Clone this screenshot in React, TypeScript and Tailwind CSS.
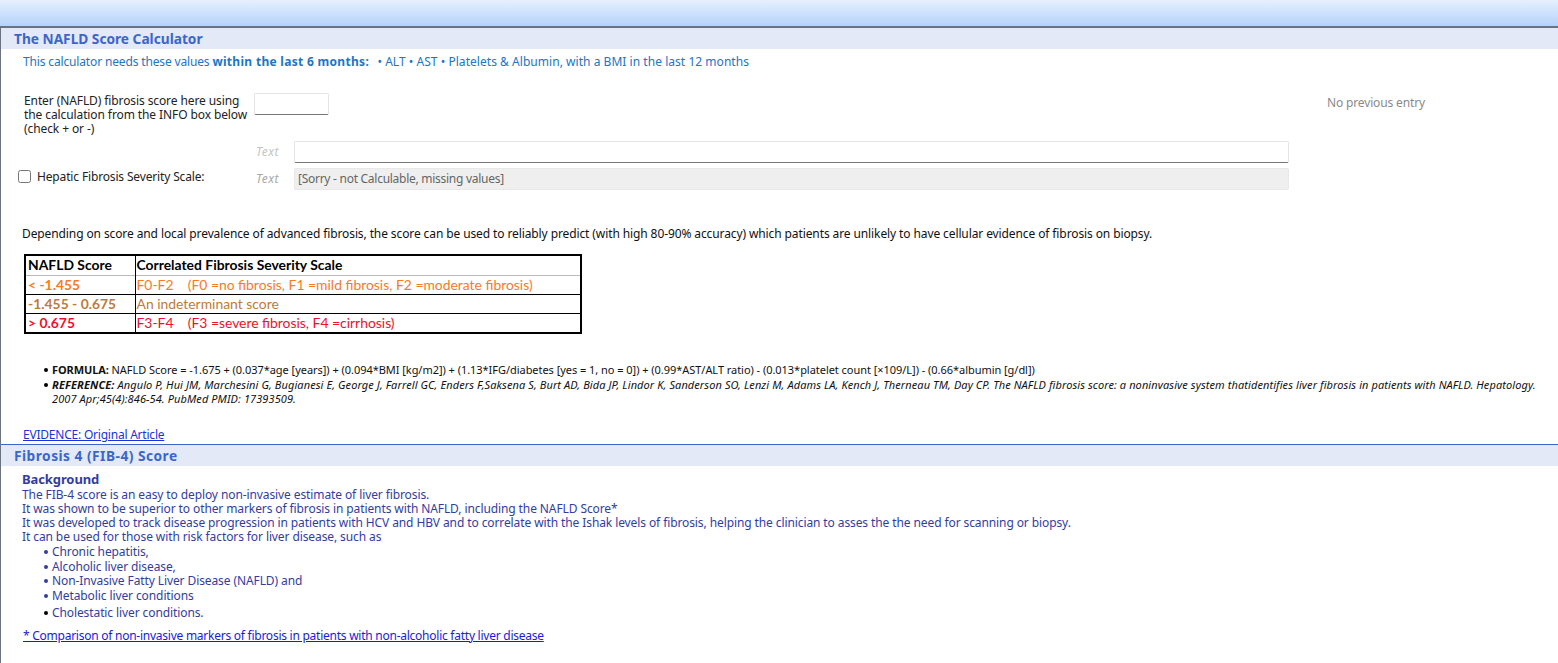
import React from 'react';

const font = "font-['Noto_Sans',_sans-serif]";

const SectionHeader = ({ title, tracking }: { title: string; tracking: string }) => (
  <div className={`h-[21px] bg-[#e3e9f7] pl-[13px] text-[13.7px] leading-[21px] font-bold text-[#3a66cc] ${tracking}`}>{title}</div>
);

const scoreRows = [
  { score: '< -1.455', scale: 'F0-F2    (F0 =no fibrosis, F1 =mild fibrosis, F2 =moderate fibrosis)', color: 'text-[#f97a1f]', height: 'h-[19px] border-b border-black' },
  { score: '-1.455 - 0.675', scale: 'An indeterminant score', color: 'text-[#c07a3a]', height: 'h-[19px] border-b border-black' },
  { score: '> 0.675', scale: 'F3-F4    (F3 =severe fibrosis, F4 =cirrhosis)', color: 'text-[#f0102a]', height: 'h-[20px]' },
];

const risks = ['Chronic hepatitis,', 'Alcoholic liver disease,', 'Non-Invasive Fatty Liver Disease (NAFLD) and', 'Metabolic liver conditions'];

const Dot = ({ color }: { color: string }) => (
  <span className={`mt-[5px] mr-[4px] h-[4px] w-[4px] shrink-0 rounded-full ${color}`} />
);

export default function App() {
  return (
    <div className={`${font} h-[663px] w-[1558px] overflow-hidden bg-white text-[12px] text-[#222]`}>
      <div className="h-[26px] bg-gradient-to-b from-[#e6f0fe] to-[#b5d3fa]" />
      <div className="h-[637px] border-t-2 border-l border-[#6b7280]">
        <SectionHeader title="The NAFLD Score Calculator" tracking="tracking-normal" />

        <p className="mt-[4px] pl-[22px] leading-[17px] text-[#2275c4]">
          <span className="tracking-[-0.15px]">This calculator needs these values </span>
          <b className="tracking-[0.3px]">within the last 6 months:</b>
          <span className="ml-[2px] tracking-[0.04px]">&nbsp; • ALT • AST • Platelets &amp; Albumin, with a BMI in the last 12 months</span>
        </p>

        <div className="mt-[23px] flex">
          <div className="w-[253px] pl-[23px] pt-[1px] leading-[14px] tracking-[-0.1px]">
            Enter (NAFLD) fibrosis score here using<br />the calculation from the INFO box below<br />(check + or -)
          </div>
          <div className="h-[22px] w-[75px] rounded-[2px] border border-[#e4e4e4] border-b-[#777]" />
          <div className="ml-[998px] mt-[1px] tracking-[-0.15px] text-[#8a8a8a]">No previous entry</div>
        </div>

        <div className="mt-[5px] flex items-center pl-[255px]">
          <span className="w-[38px] italic tracking-[0.5px] text-[#c4c4c4]">Text</span>
          <div className="h-[22px] w-[995px] rounded-[2px] border border-[#e4e4e4] border-b-[#777]" />
        </div>

        <div className="mt-[5px] flex items-center">
          <input type="checkbox" className="mb-[5px] ml-[17px] h-[13px] w-[13px] rounded-[2px]" />
          <span className="ml-[6px] mb-[5px] w-[219px] leading-[14px] tracking-[-0.15px]">Hepatic Fibrosis Severity Scale:</span>
          <span className="w-[38px] italic tracking-[0.5px] text-[#a8a8a8]">Text</span>
          <div className="h-[22px] w-[995px] rounded-[2px] border border-[#e8e8e8] bg-[#efefef] pl-[3px] leading-[20px] tracking-[-0.27px] text-[#666]">
            [Sorry - not Calculable, missing values]
          </div>
        </div>

        <p className="mt-[35px] pl-[21px] leading-[17px] tracking-[-0.105px] text-[#111]">
          Depending on score and local prevalence of advanced fibrosis, the score can be used to reliably predict (with high 80-90% accuracy) which patients are unlikely to have cellular evidence of fibrosis on biopsy.
        </p>

        <table className="mt-[12px] ml-[23px] w-[558px] border-collapse border-2 border-black font-['Lato',_sans-serif] text-[13.9px] leading-[17px]">
          <tbody>
            <tr className="h-[20px] border-b border-[#bbb]">
              <td className="w-[110px] border-r border-black pb-[1px] pl-[2px] font-bold text-black">NAFLD Score</td>
              <td className="pb-[1px] pl-[1px] font-bold text-black">Correlated Fibrosis Severity Scale</td>
            </tr>
            {scoreRows.map(row => (
              <tr key={row.score} className={`${row.height} ${row.color}`}>
                <td className="border-r border-black pb-[1px] pl-[2px] font-bold">{row.score}</td>
                <td className="whitespace-pre pb-[1px] pl-[1px]">{row.scale}</td>
              </tr>
            ))}
          </tbody>
        </table>

        <ul className="mt-[29px] pl-[43px] pr-[20px] text-[11px] leading-[14px] text-[#111]">
          <li className="mb-[1px] flex tracking-[-0.04px]">
            <Dot color="bg-black" />
            <div><b className="tracking-[-0.1px]">FORMULA:</b> NAFLD Score = -1.675 + (0.037*age [years]) + (0.094*BMI [kg/m2]) + (1.13*IFG/diabetes [yes = 1, no = 0]) + (0.99*AST/ALT ratio) - (0.013*platelet count [×109/L]) - (0.66*albumin [g/dl])</div>
          </li>
          <li className="flex italic tracking-[0.09px]">
            <Dot color="bg-black" />
            <div><b>REFERENCE:</b> Angulo P, Hui JM, Marchesini G, Bugianesi E, George J, Farrell GC, Enders F,Saksena S, Burt AD, Bida JP, Lindor K, Sanderson SO, Lenzi M, Adams LA, Kench J, Therneau TM, Day CP. The NAFLD fibrosis score: a noninvasive system thatidentifies liver fibrosis in patients with NAFLD. Hepatology.<br />2007 Apr;45(4):846-54. PubMed PMID: 17393509.</div>
          </li>
        </ul>

        <a href="#" className="mt-[21px] block pl-[22px] leading-[16px] tracking-[-0.22px] text-[#1a33dd] underline">EVIDENCE: Original Article</a>

        <div className="mt-[1px] border-t border-[#3a66cc]">
          <SectionHeader title="Fibrosis 4 (FIB-4) Score" tracking="tracking-[0.5px]" />
          <div className="pl-[21px] pt-[6px] leading-[14px] tracking-[-0.1px] text-[#333d9e]">
            <div className="mb-[2px] text-[13px] font-bold">Background</div>
            <p>The FIB-4 score is an easy to deploy non-invasive estimate of liver fibrosis.</p>
            <p>It was shown to be superior to other markers of fibrosis in patients with NAFLD, including the NAFLD Score*</p>
            <p>It was developed to track disease progression in patients with HCV and HBV and to correlate with the Ishak levels of fibrosis, helping the clinician to asses the the need for scanning or biopsy.</p>
            <p>It can be used for those with risk factors for liver disease, such as</p>
            <ul className="mt-[1px] pl-[22px] leading-[14.7px]">
              {risks.map(r => <li key={r} className="flex"><Dot color="bg-[#333d9e]" />{r}</li>)}
              <li className="mt-[2px] flex"><Dot color="bg-black" />Cholestatic liver conditions.</li>
            </ul>
            <a href="#" className="mt-[8px] block pl-[1px] tracking-[-0.25px] text-[#1a1ae0] underline">* Comparison of non-invasive markers of fibrosis in patients with non-alcoholic fatty liver disease</a>
          </div>
        </div>
      </div>
    </div>
  );
}
